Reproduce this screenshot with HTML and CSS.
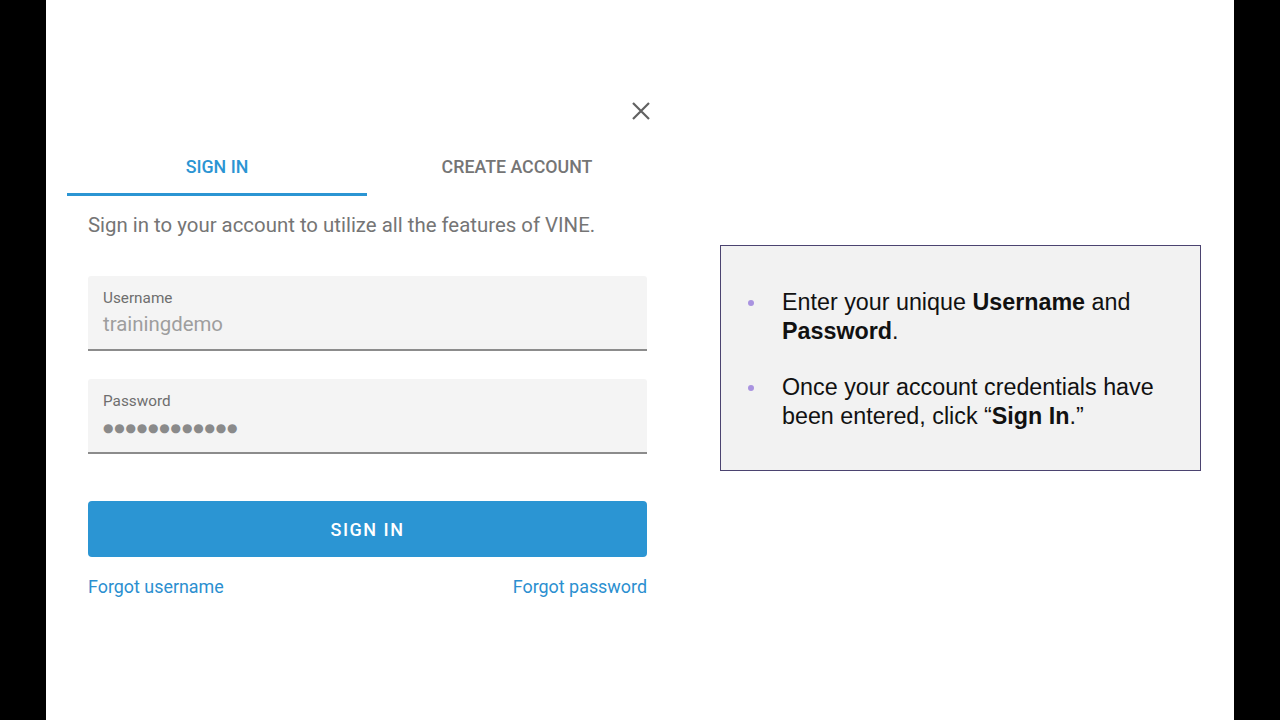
FILE: index.html
```html
<!DOCTYPE html>
<html lang="en">
<head>
<meta charset="utf-8">
<title>VINE Sign In</title>
<link rel="stylesheet" href="styles.css">
</head>
<body>
<div class="slide">
  <div class="dialog">
    <div class="dialog-head">
      <button class="close" aria-label="Close">
        <svg viewBox="0 0 18 18" width="18" height="18"><path d="M1 1L17 17M17 1L1 17" stroke="#616161" stroke-width="2.2" fill="none"/></svg>
      </button>
    </div>
    <div class="tabs">
      <div class="tab active">SIGN IN</div>
      <div class="tab">CREATE ACCOUNT</div>
    </div>
    <div class="form">
      <p class="intro">Sign in to your account to utilize all the features of VINE.</p>
      <div class="field">
        <div class="label">Username</div>
        <div class="value">trainingdemo</div>
      </div>
      <div class="field field-second">
        <div class="label">Password</div>
        <div class="value dots">●●●●●●●●●●●●</div>
      </div>
      <button class="submit">SIGN IN</button>
      <div class="links">
        <a href="#">Forgot username</a>
        <a href="#">Forgot password</a>
      </div>
    </div>
  </div>
  <div class="note">
    <ul>
      <li>Enter your unique <b>Username</b> and <b>Password</b>.</li>
      <li>Once your account credentials have been entered, click “<b>Sign In</b>.”</li>
    </ul>
  </div>
</div>
</body>
</html>
```
FILE: styles.css
```css
html, body {
  margin: 0;
  padding: 0;
  background: #000;
}
.slide {
  width: 1188px;
  height: 720px;
  margin: 0 auto;
  background: #fff;
  display: flex;
  align-items: flex-start;
  box-sizing: border-box;
  padding-left: 21px;
}
.dialog {
  width: 600px;
  margin-top: 85px;
  height: 545px;
  font-family: Roboto, "Liberation Sans", sans-serif;
}
.dialog-head {
  height: 61px;
  display: flex;
  justify-content: flex-end;
  align-items: flex-start;
}
.close {
  margin: 17px 17px 0 0;
  padding: 0;
  border: 0;
  background: none;
  width: 18px;
  height: 18px;
  display: flex;
}
.tabs {
  display: flex;
  height: 50px;
}
.tab {
  flex: 1;
  box-sizing: border-box;
  height: 50px;
  padding-top: 11px;
  line-height: 20px;
  text-align: center;
  font-size: 17.8px;
  font-weight: 500;
  color: #757575;
}
.tab.active {
  color: #2b95d3;
  border-bottom: 3px solid #2b95d3;
}
.form {
  padding: 0 20px 0 21px;
}
.intro {
  margin: 15px 0 0;
  font-size: 20.4px;
  line-height: 28px;
  color: #757575;
}
.field {
  margin-top: 37px;
  height: 75px;
  box-sizing: border-box;
  background: #f4f4f4;
  border-bottom: 2px solid #8c8c8c;
  border-radius: 3px 3px 0 0;
  padding: 13px 15px 0;
}
.field-second {
  margin-top: 28px;
}
.label {
  font-size: 15.3px;
  line-height: 18px;
  color: #6e6e6e;
}
.value {
  margin-top: 5px;
  font-size: 20.4px;
  line-height: 24px;
  color: #9e9e9e;
}
.dots {
  font-family: "DejaVu Sans", sans-serif;
  font-size: 12px;
  color: #8a8a8a;
  letter-spacing: 0.8px;
  margin-top: 6px;
}
.submit {
  display: block;
  width: 100%;
  margin-top: 47px;
  height: 56px;
  border: 0;
  border-radius: 4px;
  background: #2b95d3;
  color: #fff;
  font-family: Roboto, "Liberation Sans", sans-serif;
  font-size: 18px;
  font-weight: 500;
  letter-spacing: 1.5px;
}
.links {
  margin-top: 19px;
  display: flex;
  justify-content: space-between;
  font-size: 17.9px;
  line-height: 22px;
}
.links a {
  color: #2b8fd0;
  text-decoration: none;
}
.note {
  margin: 245px 0 0 53px;
  width: 481px;
  height: 226px;
  box-sizing: border-box;
  border: 1.5px solid #4b4370;
  background: #f2f2f2;
  padding: 42px 20px 0 28px;
  font-family: "Liberation Sans", Arial, sans-serif;
  font-size: 23.3px;
  line-height: 29px;
  color: #111;
}
.note ul {
  margin: 0;
  padding: 0;
  list-style: none;
}
.note li {
  position: relative;
  padding-left: 33px;
}
.note li + li {
  margin-top: 27px;
}
.note li::before {
  content: "";
  position: absolute;
  left: -1px;
  top: 12px;
  width: 6px;
  height: 6px;
  border-radius: 50%;
  background: #a993e0;
}
```
